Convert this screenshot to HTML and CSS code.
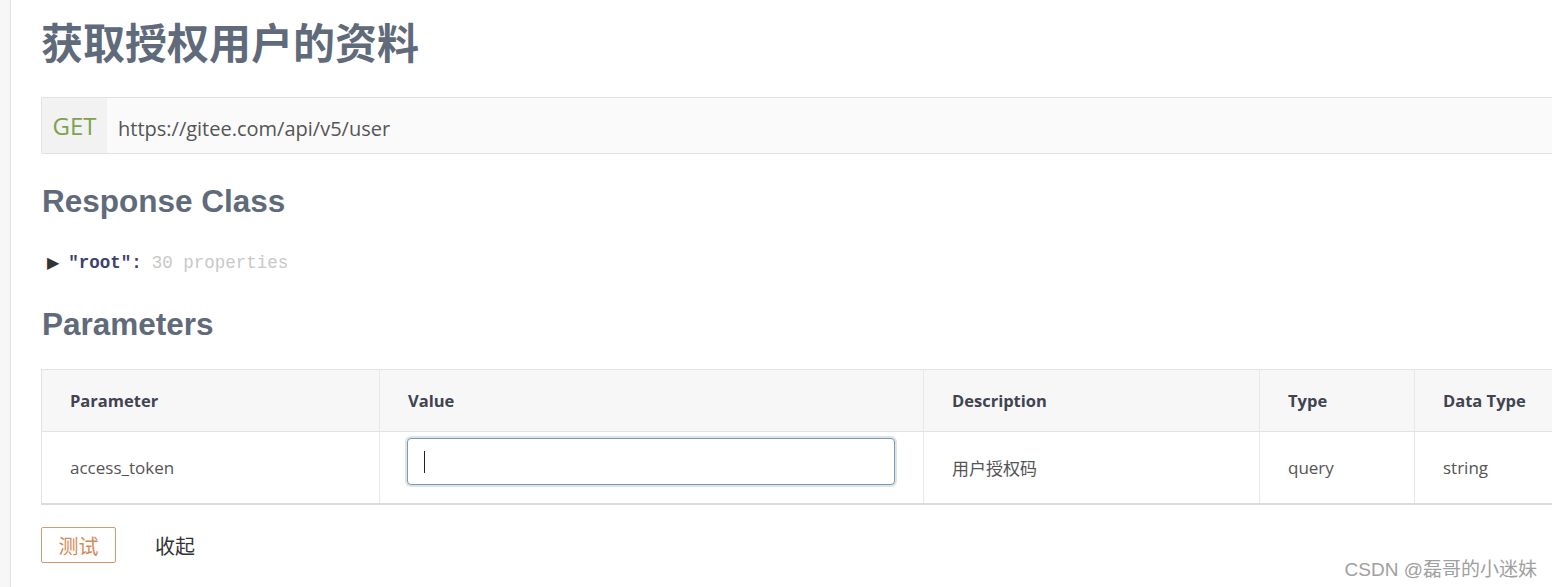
FILE: index.html
```html
<!DOCTYPE html>
<html lang="zh">
<head>
<meta charset="utf-8">
<link rel="stylesheet" href="styles.css">
</head>
<body>
<div class="page">
  <div class="strip"></div>
  <main class="main">
    <h1 class="title">获取授权用户的资料</h1>
    <div class="endpoint">
      <span class="method">GET</span>
      <span class="url">https://gitee.com/api/v5/user</span>
    </div>
    <h2 class="heading">Response Class</h2>
    <div class="tree">
      <span class="tri">&#9654;</span>
      <span class="key">″root″</span><span class="colon">:</span>
      <span class="props">30 properties</span>
    </div>
    <h2 class="heading params-heading">Parameters</h2>
    <table class="ptable">
      <colgroup>
        <col class="c1"><col class="c2"><col class="c3"><col class="c4"><col class="c5">
      </colgroup>
      <thead>
        <tr><th>Parameter</th><th>Value</th><th>Description</th><th>Type</th><th>Data Type</th></tr>
      </thead>
      <tbody>
        <tr>
          <td>access_token</td>
          <td class="vcell"><div class="input"><span class="caret"></span></div></td>
          <td>用户授权码</td>
          <td>query</td>
          <td>string</td>
        </tr>
      </tbody>
    </table>
    <div class="actions">
      <button class="btn-test">测试</button>
      <span class="collapse">收起</span>
    </div>
  </main>
</div>
<div class="watermark">CSDN @磊哥的小迷妹</div>
</body>
</html>
```
FILE: styles.css
```css
html, body {
  margin: 0;
  padding: 0;
  background: #fff;
  overflow: hidden;
}
body {
  width: 1552px;
  height: 587px;
  position: relative;
  font-family: "Open Sans", "Noto Sans CJK SC", sans-serif;
}
.page {
  display: flex;
  height: 587px;
}
.strip {
  width: 10px;
  flex: none;
  background: #f7f7f7;
  border-right: 1px solid #e3e3e3;
}
.main {
  flex: 1;
  padding-left: 30px;
  min-width: 0;
}
.title {
  margin: 19px 0 0 0;
  font-family: "Liberation Sans", "Noto Sans CJK SC", sans-serif;
  font-size: 42px;
  line-height: 52px;
  font-weight: bold;
  color: #5f6a7a;
}
.endpoint {
  margin-top: 26px;
  height: 55px;
  border: 1px solid #e2e2e2;
  border-right: none;
  background: #fafafa;
  display: flex;
  align-items: center;
  border-radius: 2px 0 0 2px;
}
.method {
  width: 65px;
  height: 100%;
  background: #f2f2f2;
  color: #7ea24e;
  font-size: 24px;
  display: flex;
  align-items: center;
  justify-content: center;
}
.url {
  margin-left: 11px;
  margin-top: 6px;
  font-size: 20px;
  color: #555;
}
.heading {
  margin: 28px 0 0 1px;
  font-family: "Liberation Sans", sans-serif;
  font-size: 31.5px;
  line-height: 38px;
  font-weight: bold;
  color: #5f6a7a;
}
.tree {
  margin-top: 33px;
  margin-left: 6px;
  font-family: "Liberation Mono", monospace;
  font-size: 17.5px;
  line-height: 20px;
  display: flex;
  align-items: baseline;
}
.tri {
  font-family: "DejaVu Sans", sans-serif;
  font-size: 16px;
  color: #333;
  margin-right: 9px;
}
.key {
  color: #3b3f72;
  font-weight: bold;
}
.colon {
  color: #3b3f72;
  font-weight: bold;
  margin-right: 10px;
}
.props {
  color: #c8c8c8;
}
.params-heading {
  margin-top: 32px;
}
.ptable {
  margin-top: 26px;
  width: 1530px;
  border-collapse: collapse;
  table-layout: fixed;
  font-size: 17px;
  color: #444;
  border-left: 1px solid #e3e3e3;
  border-top: 1px solid #e3e3e3;
  border-bottom: 2px solid #dcdcdc;
}
.c1 { width: 338px; }
.c2 { width: 544px; }
.c3 { width: 336px; }
.c4 { width: 155px; }
.c5 { width: 157px; }
.ptable th {
  background: #f7f7f7;
  height: 61px;
  text-align: left;
  padding: 0 0 0 28px;
  font-size: 16.5px;
  font-weight: bold;
  color: #3f4450;
  border-right: 1px solid #e8e8e8;
  border-bottom: 1px solid #e3e3e3;
}
.ptable td {
  height: 71px;
  padding: 0 0 0 28px;
  border-right: 1px solid #e8e8e8;
  color: #555;
}
.ptable td.vcell {
  padding: 6px 0 0 27px;
  height: 65px;
  vertical-align: top;
}
.input {
  width: 486px;
  height: 45px;
  border: 1px solid #8497a8;
  border-radius: 4px;
  box-shadow: 0 0 0 2px #dde5ec;
  background: #fff;
  display: flex;
  align-items: center;
  box-sizing: content-box;
}
.caret {
  display: block;
  width: 1px;
  height: 22px;
  background: #222;
  margin-left: 16px;
}
.actions {
  margin-top: 22px;
  display: flex;
  align-items: center;
}
.btn-test {
  width: 75px;
  height: 36px;
  border: 1px solid #d59a6c;
  border-radius: 2px;
  background: #fff;
  color: #d48a57;
  font-family: "Noto Sans CJK SC", sans-serif;
  font-size: 20px;
  padding: 0;
}
.collapse {
  margin-left: 39px;
  font-family: "Noto Sans CJK SC", sans-serif;
  font-size: 20px;
  color: #333;
}
.watermark {
  position: absolute;
  right: 15px;
  bottom: 6px;
  font-family: "Liberation Sans", "Noto Sans CJK SC", sans-serif;
  font-size: 19px;
  color: #a0a0a0;
}
```
